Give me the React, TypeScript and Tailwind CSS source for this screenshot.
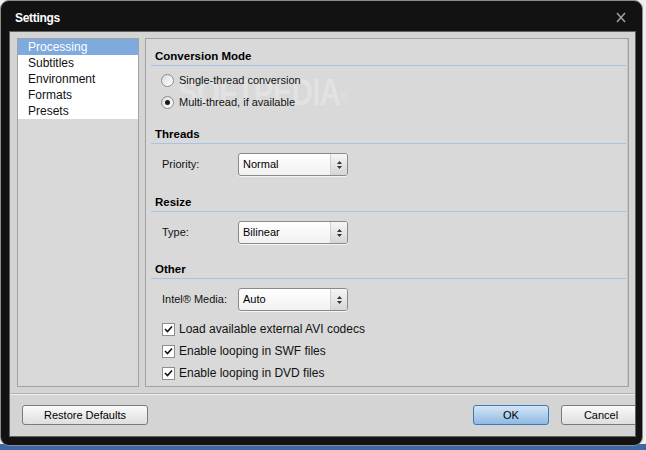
import { ReactNode } from 'react';

const navItems = ['Processing', 'Subtitles', 'Environment', 'Formats', 'Presets'];

function SectionHeader({ title, className }: { title: string; className?: string }) {
  return (
    <div className={`ml-[5px] mr-[2px] h-[18px] border-b border-[#a3c4e6] pl-[4px] text-[11.5px] font-bold leading-[16px] text-black ${className ?? ''}`}>
      {title}
    </div>
  );
}

function Radio({ label, checked }: { label: string; checked?: boolean }) {
  return (
    <div className="flex h-[22px] items-center pl-[15px]">
      <div className="flex h-[13px] w-[13px] items-center justify-center rounded-full border border-[#8d8d8d] bg-gradient-to-br from-[#dcdcdc] to-white">
        {checked && <div className="h-[5px] w-[5px] rounded-full bg-[#1a1a1a]" />}
      </div>
      <span className="ml-[5px] text-[11px] text-[#111]">{label}</span>
    </div>
  );
}

function Select({ value }: { value: string }) {
  return (
    <div className="flex h-[23px] w-[110px] overflow-hidden rounded-[3px] border border-[#8a8a8a] bg-gradient-to-b from-white to-[#f1f1f1] shadow-[0_1px_0_#f4f4f4]">
      <div className="flex flex-1 items-center pl-[4px] text-[11px] text-black">{value}</div>
      <div className="flex w-[17px] flex-col items-center justify-center gap-[2px] border-l border-[#cfcfcf] bg-gradient-to-b from-[#f6f6f6] to-[#d6d6d6]">
        <svg width="5" height="3" viewBox="0 0 5 3">
          <path d="M2.5 0 L5 3 L0 3 Z" fill="#333" />
        </svg>
        <svg width="5" height="3" viewBox="0 0 5 3">
          <path d="M0 0 L5 0 L2.5 3 Z" fill="#333" />
        </svg>
      </div>
    </div>
  );
}

function Field({ label, children, className }: { label: string; children: ReactNode; className?: string }) {
  return (
    <div className={`flex items-center pl-[16px] ${className ?? ''}`}>
      <span className="w-[76px] text-[11px] text-[#111]">{label}</span>
      {children}
    </div>
  );
}

function Check({ label }: { label: string }) {
  return (
    <div className="flex h-[22px] items-center pl-[16px]">
      <div className="flex h-[13px] w-[13px] items-center justify-center border border-[#8e8e8e] bg-white">
        <svg width="9" height="8" viewBox="0 0 9 8">
          <path d="M1 4 L3.5 6.5 L8 1.5" stroke="#111" strokeWidth="1.6" fill="none" />
        </svg>
      </div>
      <span className="ml-[4px] text-[12px] text-[#111]">{label}</span>
    </div>
  );
}

function Button({ label, primary, className }: { label: string; primary?: boolean; className?: string }) {
  return (
    <div
      className={`flex h-[20px] shrink-0 items-center justify-center rounded-[3px] border text-[11px] text-black ${
        primary
          ? 'border-[#3d7bb0] bg-gradient-to-b from-[#d4e6f7] to-[#8fb9e3]'
          : 'border-[#7b7b7b] bg-gradient-to-b from-[#fafafa] to-[#dedede]'
      } ${className ?? ''}`}
    >
      {label}
    </div>
  );
}

export default function App() {
  return (
    <div className="h-[450px] w-[646px] overflow-hidden bg-[linear-gradient(to_bottom,#efefef_0,#efefef_444px,#3c68a6_444px)] font-['Liberation_Sans',Arial,sans-serif]">
      <div className="flex h-[446px] w-[643px] flex-col rounded-[9px] border border-[#8c8c8c] bg-[#121212]">
        {/* title bar */}
        <div className="flex h-[30px] shrink-0 items-center justify-between pl-[14px] pr-[16px] pt-[3px]">
          <span className="text-[12px] font-bold tracking-[-0.3px] text-white">Settings</span>
          <svg width="10" height="11" viewBox="0 0 10 11">
            <path d="M1 1 L9 10 M9 1 L1 10" stroke="#a2a2a2" strokeWidth="1.5" />
          </svg>
        </div>

        {/* client area */}
        <div className="mb-[8px] ml-[8px] mr-[6px] flex flex-1 flex-col overflow-hidden border border-[#626262] bg-[#d4d4d4]">
          <div className="flex h-[355px] shrink-0 gap-[6px] pl-[7px] pr-[6px] pt-[6px]">
            {/* left nav */}
            <div className="w-[122px] border border-[#a2a2a2] bg-[#d9d9d9]">
              <div className="bg-white">
                {navItems.map((item, i) => (
                  <div
                    key={item}
                    className={`h-[16px] pl-[10px] text-[12px] leading-[16px] ${i === 0 ? 'bg-[#7eaade] text-white' : 'text-[#111]'}`}
                  >
                    {item}
                  </div>
                ))}
              </div>
            </div>

            {/* right panel */}
            <div className="relative flex-1 border border-[#a2a2a2] bg-[#d9d9d9] shadow-[inset_-1px_0_0_#c4c4c4]">
              {/* watermark */}
              <div className="pointer-events-none absolute left-[32px] top-[26px] origin-left scale-x-[0.8] text-[37px] font-bold tracking-[-1px] text-white/25">
                SOFTPEDIA<sup className="text-[10px]">®</sup>
              </div>

              <SectionHeader title="Conversion Mode" className="mt-[9px]" />
              <div className="relative mt-[3px]">
                <Radio label="Single-thread conversion" />
                <Radio label="Multi-thread, if available" checked />
              </div>

              <SectionHeader title="Threads" className="mt-[13px]" />
              <Field label="Priority:" className="mt-[9px]">
                <Select value="Normal" />
              </Field>

              <SectionHeader title="Resize" className="mt-[18px]" />
              <Field label="Type:" className="mt-[9px]">
                <Select value="Bilinear" />
              </Field>

              <SectionHeader title="Other" className="mt-[17px]" />
              <Field label="Intel® Media:" className="mt-[9px]">
                <Select value="Auto" />
              </Field>
              <div className="mt-[7px]">
                <Check label="Load available external AVI codecs" />
                <Check label="Enable looping in SWF files" />
                <Check label="Enable looping in DVD files" />
              </div>
            </div>
          </div>

          <div className="mt-[6px] h-[2px] shrink-0 border-t border-b border-t-[#b3b3b3] border-b-[#efefef]" />

          <div className="mt-[10px] flex pl-[12px]">
            <Button label="Restore Defaults" className="w-[126px]" />
            <div className="ml-auto flex gap-[12px]">
              <Button label="OK" primary className="w-[76px]" />
              <Button label="Cancel" className="mr-[-6px] w-[80px]" />
            </div>
          </div>
        </div>
      </div>
    </div>
  );
}
